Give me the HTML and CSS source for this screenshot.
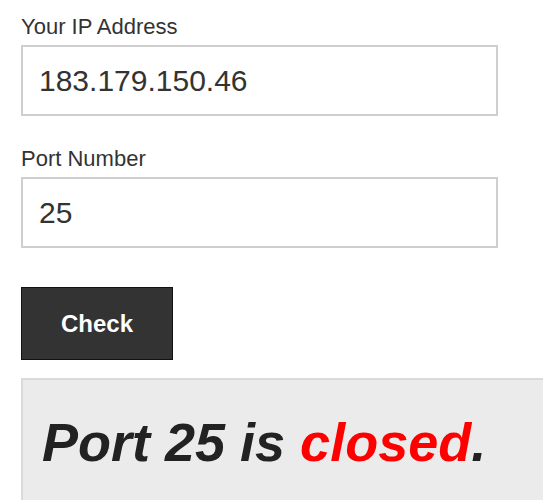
FILE: index.html
```html
<!DOCTYPE html>
<html>
<head>
<meta charset="utf-8">
<link rel="stylesheet" href="styles.css">
</head>
<body>
<main class="page">
  <form class="checker">
    <label class="field-label" for="ip">Your IP Address</label>
    <input class="field-input" id="ip" type="text" value="183.179.150.46">
    <label class="field-label second" for="port">Port Number</label>
    <input class="field-input" id="port" type="text" value="25">
    <button class="check-btn" type="button">Check</button>
  </form>
  <div class="result">
    <p class="result-text">Port 25 is <span class="closed">closed</span>.</p>
  </div>
</main>
</body>
</html>
```
FILE: styles.css
```css
html, body {
  margin: 0;
  padding: 0;
  background: #fff;
  overflow: hidden;
}
body {
  font-family: "Liberation Sans", Arial, Helvetica, sans-serif;
  color: #333;
}
.page {
  padding: 14px 0 0 21px;
}
.checker {
  display: flex;
  flex-direction: column;
  align-items: flex-start;
}
.field-label {
  display: block;
  font-size: 22px;
  line-height: 25px;
  color: #333;
  margin-bottom: 6px;
}
.field-label.second {
  margin-top: 30px;
}
.field-input {
  box-sizing: border-box;
  width: 477px;
  height: 71px;
  border: 2px solid #cfcfcf;
  border-radius: 0;
  padding: 0 0 0 16px;
  margin: 0;
  font-family: "Liberation Sans", Arial, Helvetica, sans-serif;
  font-size: 30px;
  color: #333;
  background: #fff;
  outline: none;
}
.check-btn {
  box-sizing: border-box;
  margin-top: 39px;
  width: 152px;
  height: 73px;
  background: #333;
  border: 1px solid #111;
  border-radius: 0;
  color: #fff;
  font-family: "Liberation Sans", Arial, Helvetica, sans-serif;
  font-weight: bold;
  font-size: 24px;
  padding: 0;
}
.result {
  box-sizing: border-box;
  margin-top: 18px;
  height: 123px;
  background: #ebebeb;
  border-top: 2px solid #dadada;
  border-left: 2px solid #dadada;
  padding: 30px 0 0 19px;
}
.result-text {
  margin: 0;
  font-size: 54px;
  line-height: 65px;
  font-weight: bold;
  font-style: italic;
  color: #222;
  white-space: nowrap;
}
.closed {
  color: #ff0000;
}
```
